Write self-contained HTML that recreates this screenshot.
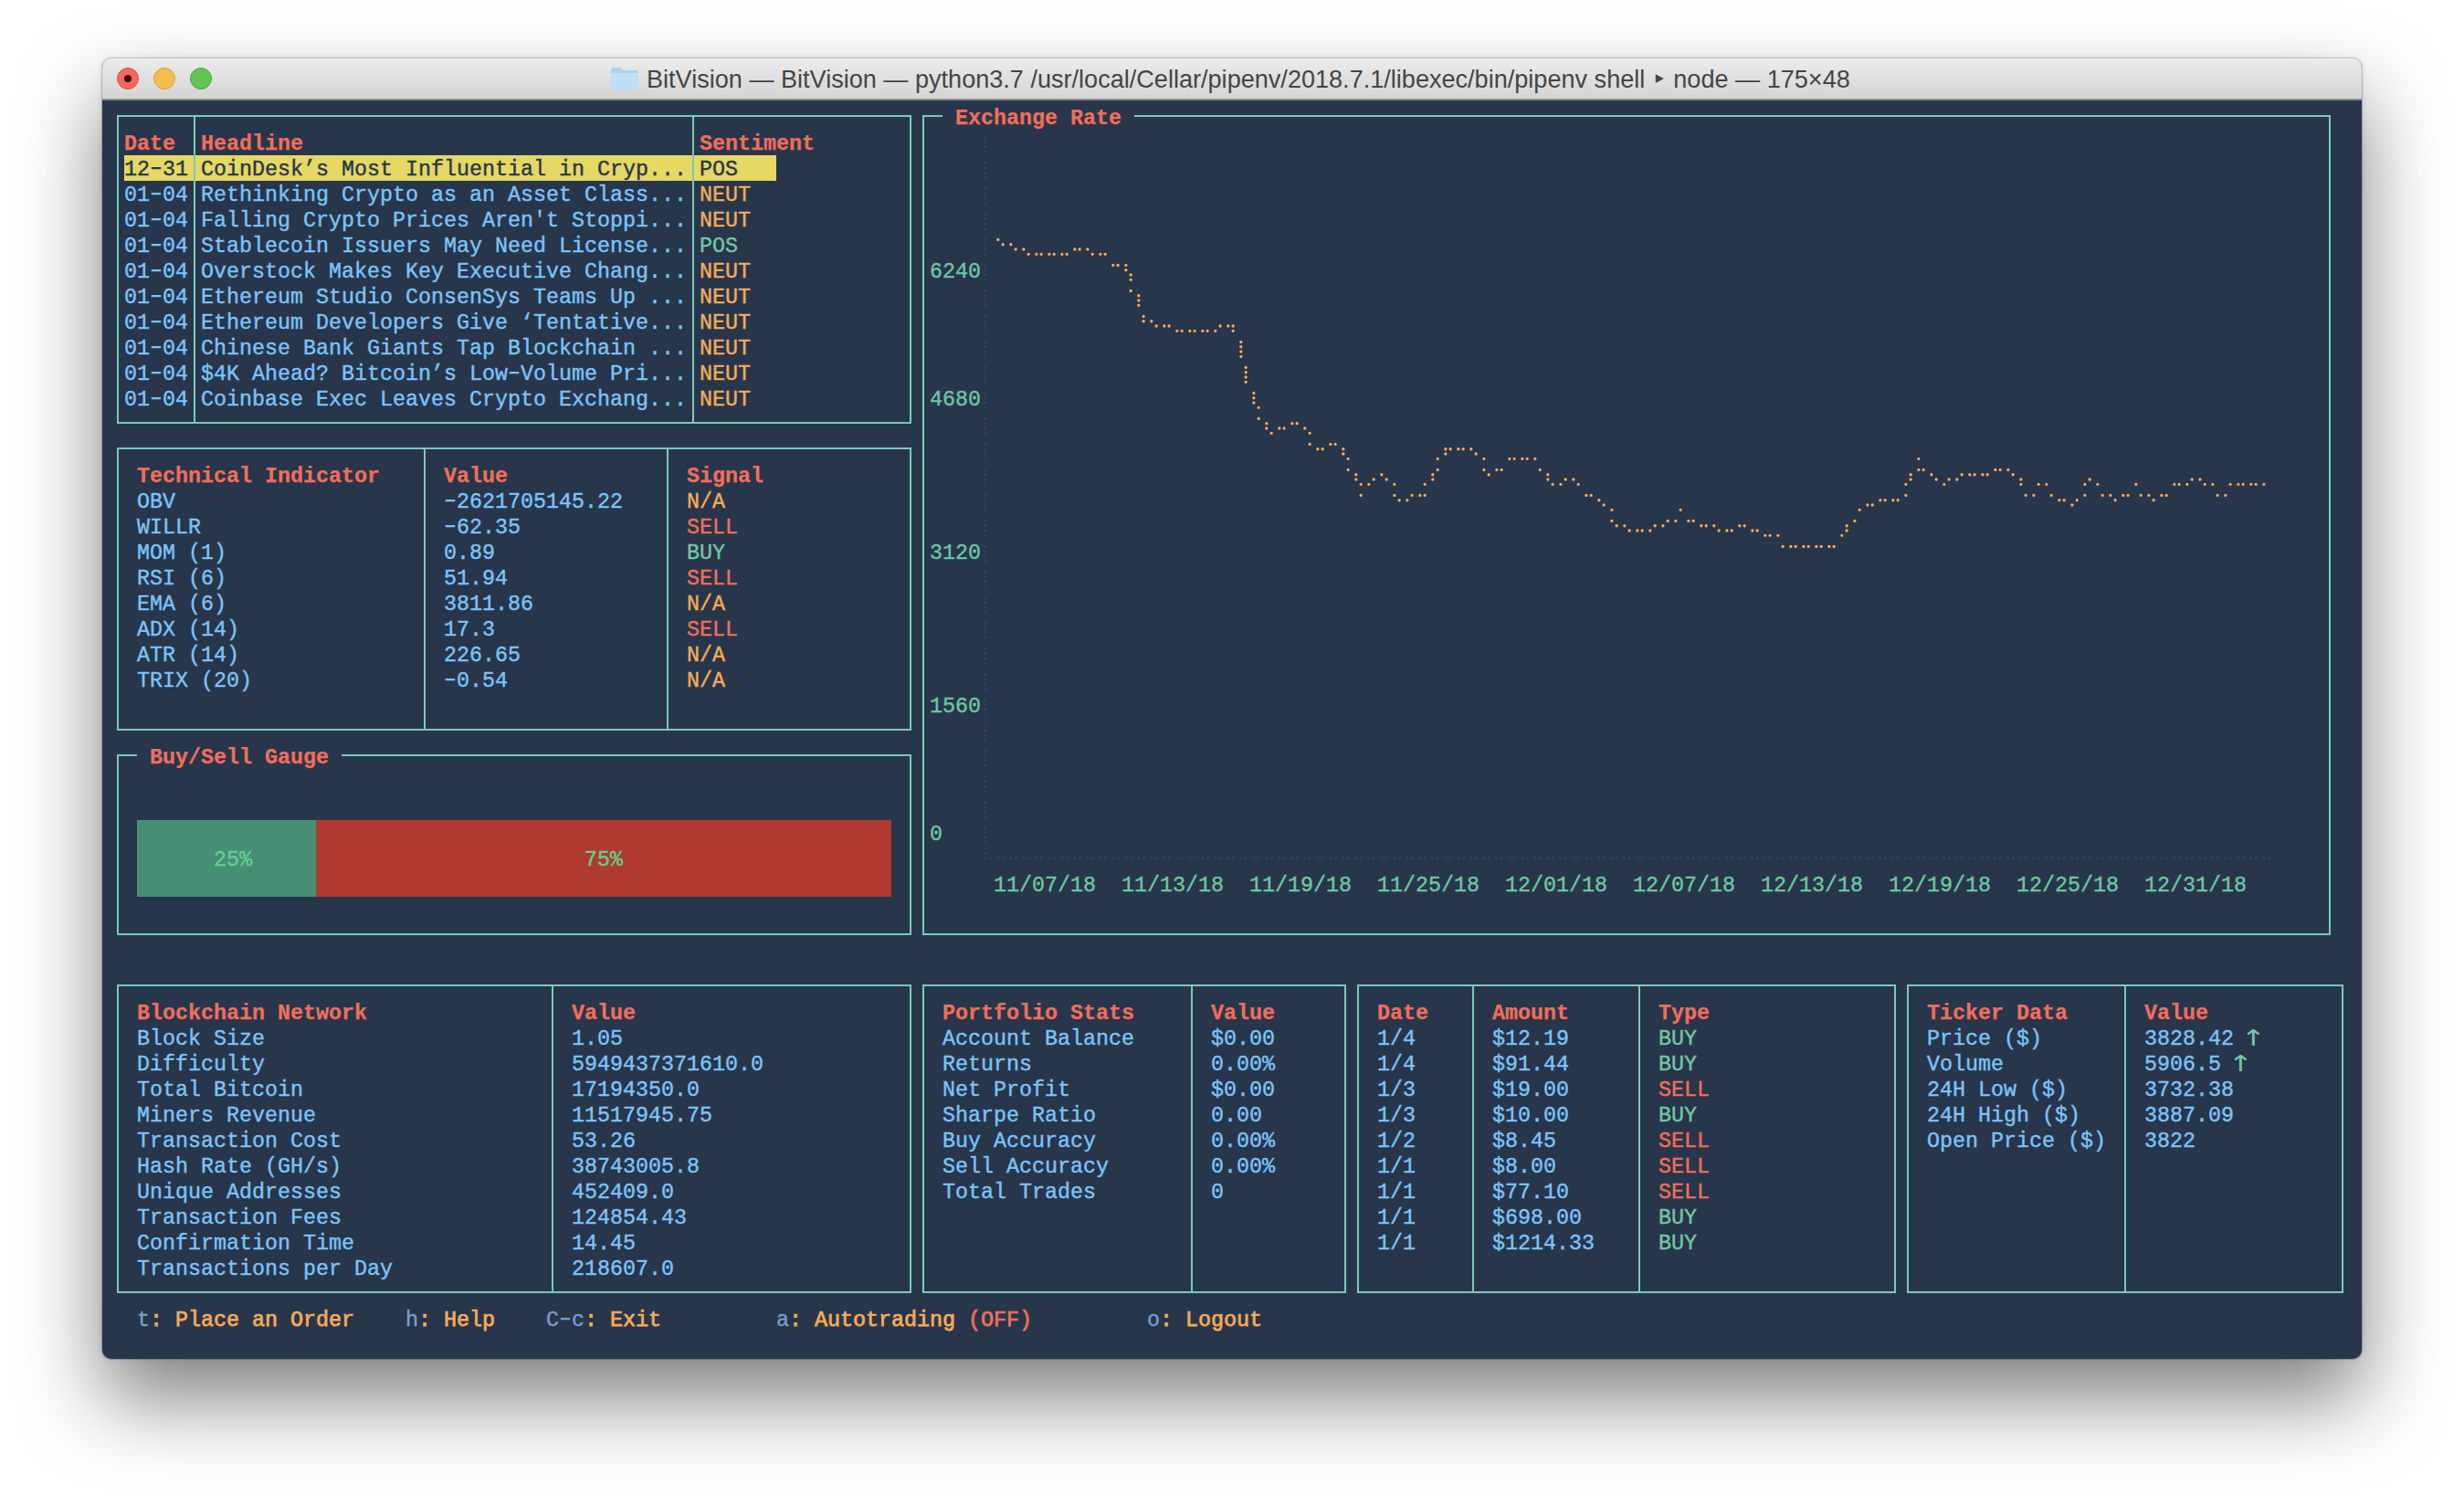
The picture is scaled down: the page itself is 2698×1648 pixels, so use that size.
<!DOCTYPE html>
<html lang="en"><head><meta charset="utf-8"><title>BitVision</title>
<style>
html,body{margin:0;padding:0;background:#fff}
body{width:2698px;height:1648px;position:relative;overflow:hidden}
#win{position:absolute;left:112px;top:64px;width:2474px;height:1424px;border-radius:10px;background:#28364b;
 box-shadow:0 0 0 1px rgba(0,0,0,.18),0 44px 90px rgba(0,0,0,.5),0 0 6px rgba(0,0,0,.12)}
#bar{position:absolute;left:112px;top:64px;width:2474px;height:44px;border-radius:10px 10px 0 0;
 background:linear-gradient(#ececec,#d4d4d4);box-shadow:inset 0 1px 0 #f6f6f6}
#barline{position:absolute;left:112px;top:108px;width:2474px;height:2px;background:linear-gradient(#9c9c9c,#7c7c7c)}
.tl{position:absolute;top:74px;width:24px;height:24px;border-radius:50%;box-sizing:border-box}
#title{position:absolute;left:708px;top:64px;height:45px;line-height:46px;font:27.08px/46px "Liberation Sans","DejaVu Sans",sans-serif;color:#454545;white-space:pre;letter-spacing:0}
.t{position:absolute;white-space:pre;font:23.333px/28px "Liberation Mono","DejaVu Sans Mono",monospace;height:28px;margin-top:1.5px}
.t{-webkit-text-stroke:0.4px currentColor}
.b{font-weight:bold;-webkit-text-stroke:0.25px currentColor}
.m{-webkit-text-stroke:0.75px currentColor}
.h{display:inline-block;font-weight:inherit;transform:translateY(-2px) scaleX(1.5)}
.ar{font-family:"DejaVu Sans",sans-serif;font-size:23.5px;width:14px;text-align:center;transform:translate(-3.5px,-1.5px) scale(1.4,1.04);-webkit-text-stroke:0}
.r{color:#f16e5b}.bl{color:#7cc3f8}.o{color:#f5ab59}.g{color:#72c6a3}.d{color:#28364b}
.k{color:#7b9dcc}.ax{color:#6fc5a0}.gt{color:#62d08c}
.l{position:absolute;background:#79cbb9}
.hl{position:absolute;background:#e5d865}
.gg{position:absolute;background:#468f75}.gr{position:absolute;background:#b03a30}
</style></head><body>
<div id="win"></div>
<div id="bar"></div><div id="barline"></div>
<i class="tl" style="left:128px;background:#ee6a5e;border:1px solid #d95045"></i>
<i class="tl" style="left:168px;background:#f5bd4f;border:1px solid #dba03a"></i>
<i class="tl" style="left:208px;background:#61c554;border:1px solid #4ba83e"></i>
<i style="position:absolute;left:136px;top:82px;width:8px;height:8px;border-radius:50%;background:#4d0000"></i>
<svg style="position:absolute;left:668px;top:71px" width="32" height="30" viewBox="0 0 32 30"><path d="M1 5.5C1 4.1 2.1 3 3.5 3h8l3 3h14c1.4 0 2.5 1.1 2.5 2.5v16c0 1.400-1.100 2.500-2.500 2.500h-25C2.100 27 1 25.900 1 24.500z" fill="#a9d3ee"/><path d="M1 9h30v15.500c0 1.400-1.100 2.500-2.500 2.500h-25C2.100 27 1 25.900 1 24.500z" fill="#bfe0f4"/></svg>
<div id="title">BitVision — BitVision — python3.7 /usr/local/Cellar/pipenv/2018.7.1/libexec/bin/pipenv shell ‣ node — 175×48</div>
<i class="hl" style="left:136px;top:170px;width:714px;height:28px"></i>
<i class="l" style="left:128px;top:126px;width:870px;height:2px"></i>
<i class="l" style="left:128px;top:462px;width:870px;height:2px"></i>
<i class="l" style="left:128px;top:126px;width:2px;height:338px"></i>
<i class="l" style="left:996px;top:126px;width:2px;height:338px"></i>
<i class="l" style="left:212px;top:126px;width:2px;height:338px"></i>
<i class="l" style="left:758px;top:126px;width:2px;height:338px"></i>
<span class="t r b" style="left:136px;top:142px">Date</span>
<span class="t r b" style="left:220px;top:142px">Headline</span>
<span class="t r b" style="left:766px;top:142px">Sentiment</span>
<span class="t d" style="left:136px;top:170px">12<b class="h">-</b>31</span>
<span class="t d" style="left:220px;top:170px">CoinDesk’s Most Influential in Cryp...</span>
<span class="t d" style="left:766px;top:170px">POS</span>
<span class="t bl" style="left:136px;top:198px">01<b class="h">-</b>04</span>
<span class="t bl" style="left:220px;top:198px">Rethinking Crypto as an Asset Class...</span>
<span class="t o" style="left:766px;top:198px">NEUT</span>
<span class="t bl" style="left:136px;top:226px">01<b class="h">-</b>04</span>
<span class="t bl" style="left:220px;top:226px">Falling Crypto Prices Aren't Stoppi...</span>
<span class="t o" style="left:766px;top:226px">NEUT</span>
<span class="t bl" style="left:136px;top:254px">01<b class="h">-</b>04</span>
<span class="t bl" style="left:220px;top:254px">Stablecoin Issuers May Need License...</span>
<span class="t g" style="left:766px;top:254px">POS</span>
<span class="t bl" style="left:136px;top:282px">01<b class="h">-</b>04</span>
<span class="t bl" style="left:220px;top:282px">Overstock Makes Key Executive Chang...</span>
<span class="t o" style="left:766px;top:282px">NEUT</span>
<span class="t bl" style="left:136px;top:310px">01<b class="h">-</b>04</span>
<span class="t bl" style="left:220px;top:310px">Ethereum Studio ConsenSys Teams Up ...</span>
<span class="t o" style="left:766px;top:310px">NEUT</span>
<span class="t bl" style="left:136px;top:338px">01<b class="h">-</b>04</span>
<span class="t bl" style="left:220px;top:338px">Ethereum Developers Give ‘Tentative...</span>
<span class="t o" style="left:766px;top:338px">NEUT</span>
<span class="t bl" style="left:136px;top:366px">01<b class="h">-</b>04</span>
<span class="t bl" style="left:220px;top:366px">Chinese Bank Giants Tap Blockchain ...</span>
<span class="t o" style="left:766px;top:366px">NEUT</span>
<span class="t bl" style="left:136px;top:394px">01<b class="h">-</b>04</span>
<span class="t bl" style="left:220px;top:394px">$4K Ahead? Bitcoin’s Low<b class="h">-</b>Volume Pri...</span>
<span class="t o" style="left:766px;top:394px">NEUT</span>
<span class="t bl" style="left:136px;top:422px">01<b class="h">-</b>04</span>
<span class="t bl" style="left:220px;top:422px">Coinbase Exec Leaves Crypto Exchang...</span>
<span class="t o" style="left:766px;top:422px">NEUT</span>
<i class="l" style="left:128px;top:490px;width:870px;height:2px"></i>
<i class="l" style="left:128px;top:798px;width:870px;height:2px"></i>
<i class="l" style="left:128px;top:490px;width:2px;height:310px"></i>
<i class="l" style="left:996px;top:490px;width:2px;height:310px"></i>
<i class="l" style="left:464px;top:490px;width:2px;height:310px"></i>
<i class="l" style="left:730px;top:490px;width:2px;height:310px"></i>
<span class="t r b" style="left:150px;top:506px">Technical Indicator</span>
<span class="t r b" style="left:486px;top:506px">Value</span>
<span class="t r b" style="left:752px;top:506px">Signal</span>
<span class="t bl" style="left:150px;top:534px">OBV</span>
<span class="t bl" style="left:486px;top:534px"><b class="h">-</b>2621705145.22</span>
<span class="t o" style="left:752px;top:534px">N/A</span>
<span class="t bl" style="left:150px;top:562px">WILLR</span>
<span class="t bl" style="left:486px;top:562px"><b class="h">-</b>62.35</span>
<span class="t r" style="left:752px;top:562px">SELL</span>
<span class="t bl" style="left:150px;top:590px">MOM (1)</span>
<span class="t bl" style="left:486px;top:590px">0.89</span>
<span class="t g" style="left:752px;top:590px">BUY</span>
<span class="t bl" style="left:150px;top:618px">RSI (6)</span>
<span class="t bl" style="left:486px;top:618px">51.94</span>
<span class="t r" style="left:752px;top:618px">SELL</span>
<span class="t bl" style="left:150px;top:646px">EMA (6)</span>
<span class="t bl" style="left:486px;top:646px">3811.86</span>
<span class="t o" style="left:752px;top:646px">N/A</span>
<span class="t bl" style="left:150px;top:674px">ADX (14)</span>
<span class="t bl" style="left:486px;top:674px">17.3</span>
<span class="t r" style="left:752px;top:674px">SELL</span>
<span class="t bl" style="left:150px;top:702px">ATR (14)</span>
<span class="t bl" style="left:486px;top:702px">226.65</span>
<span class="t o" style="left:752px;top:702px">N/A</span>
<span class="t bl" style="left:150px;top:730px">TRIX (20)</span>
<span class="t bl" style="left:486px;top:730px"><b class="h">-</b>0.54</span>
<span class="t o" style="left:752px;top:730px">N/A</span>
<i class="l" style="left:128px;top:826px;width:22px;height:2px"></i>
<i class="l" style="left:374px;top:826px;width:624px;height:2px"></i>
<span class="t r b" style="left:164px;top:814px">Buy/Sell Gauge</span>
<i class="l" style="left:128px;top:1022px;width:870px;height:2px"></i>
<i class="l" style="left:128px;top:826px;width:2px;height:198px"></i>
<i class="l" style="left:996px;top:826px;width:2px;height:198px"></i>
<i class="gg" style="left:150px;top:898px;width:196px;height:84px"></i>
<i class="gr" style="left:346px;top:898px;width:630px;height:84px"></i>
<span class="t gt" style="left:234px;top:926px">25%</span>
<span class="t gt" style="left:640px;top:926px">75%</span>
<i class="l" style="left:1010px;top:126px;width:22px;height:2px"></i>
<i class="l" style="left:1242px;top:126px;width:1310px;height:2px"></i>
<span class="t r b" style="left:1046px;top:114px">Exchange Rate</span>
<i class="l" style="left:1010px;top:1022px;width:1542px;height:2px"></i>
<i class="l" style="left:1010px;top:126px;width:2px;height:898px"></i>
<i class="l" style="left:2550px;top:126px;width:2px;height:898px"></i>
<span class="t ax" style="left:1018px;top:282px">6240</span>
<span class="t ax" style="left:1018px;top:422px">4680</span>
<span class="t ax" style="left:1018px;top:590px">3120</span>
<span class="t ax" style="left:1018px;top:758px">1560</span>
<span class="t ax" style="left:1018px;top:898px">0</span>
<span class="t ax" style="left:1088px;top:954px">11/07/18</span>
<span class="t ax" style="left:1228px;top:954px">11/13/18</span>
<span class="t ax" style="left:1368px;top:954px">11/19/18</span>
<span class="t ax" style="left:1508px;top:954px">11/25/18</span>
<span class="t ax" style="left:1648px;top:954px">12/01/18</span>
<span class="t ax" style="left:1788px;top:954px">12/07/18</span>
<span class="t ax" style="left:1928px;top:954px">12/13/18</span>
<span class="t ax" style="left:2068px;top:954px">12/19/18</span>
<span class="t ax" style="left:2208px;top:954px">12/25/18</span>
<span class="t ax" style="left:2348px;top:954px">12/31/18</span>
<svg style="position:absolute;left:0;top:0" width="2698" height="1648" viewBox="0 0 2698 1648" fill="none" stroke-linecap="round"><path stroke="#2f4160" stroke-width="3.3" d="M1078.85 150.45h0M1078.85 155.75h0M1078.85 161h0M1078.85 166.30h0M1078.85 178.45h0M1078.85 183.75h0M1078.85 189h0M1078.85 194.30h0M1078.85 206.45h0M1078.85 211.75h0M1078.85 217h0M1078.85 222.30h0M1078.85 234.45h0M1078.85 239.75h0M1078.85 245h0M1078.85 250.30h0M1078.85 262.45h0M1078.85 267.75h0M1078.85 273h0M1078.85 278.30h0M1078.85 290.45h0M1078.85 295.75h0M1078.85 301h0M1078.85 306.30h0M1078.85 318.45h0M1078.85 323.75h0M1078.85 329h0M1078.85 334.30h0M1078.85 346.45h0M1078.85 351.75h0M1078.85 357h0M1078.85 362.30h0M1078.85 374.45h0M1078.85 379.75h0M1078.85 385h0M1078.85 390.30h0M1078.85 402.45h0M1078.85 407.75h0M1078.85 413h0M1078.85 418.30h0M1078.85 430.45h0M1078.85 435.75h0M1078.85 441h0M1078.85 446.30h0M1078.85 458.45h0M1078.85 463.75h0M1078.85 469h0M1078.85 474.30h0M1078.85 486.45h0M1078.85 491.75h0M1078.85 497h0M1078.85 502.30h0M1078.85 514.45h0M1078.85 519.75h0M1078.85 525h0M1078.85 530.30h0M1078.85 542.45h0M1078.85 547.75h0M1078.85 553h0M1078.85 558.30h0M1078.85 570.45h0M1078.85 575.75h0M1078.85 581h0M1078.85 586.30h0M1078.85 598.45h0M1078.85 603.75h0M1078.85 609h0M1078.85 614.30h0M1078.85 626.45h0M1078.85 631.75h0M1078.85 637h0M1078.85 642.30h0M1078.85 654.45h0M1078.85 659.75h0M1078.85 665h0M1078.85 670.30h0M1078.85 682.45h0M1078.85 687.75h0M1078.85 693h0M1078.85 698.30h0M1078.85 710.45h0M1078.85 715.75h0M1078.85 721h0M1078.85 726.30h0M1078.85 738.45h0M1078.85 743.75h0M1078.85 749h0M1078.85 754.30h0M1078.85 766.45h0M1078.85 771.75h0M1078.85 777h0M1078.85 782.30h0M1078.85 794.45h0M1078.85 799.75h0M1078.85 805h0M1078.85 810.30h0M1078.85 822.45h0M1078.85 827.75h0M1078.85 833h0M1078.85 838.30h0M1078.85 850.45h0M1078.85 855.75h0M1078.85 861h0M1078.85 866.30h0M1078.85 878.45h0M1078.85 883.75h0M1078.85 889h0M1078.85 894.30h0M1078.85 906.45h0M1078.85 911.75h0M1078.85 917h0M1078.85 922.30h0M1078.85 934.45h0M1078.85 939.75h0M1084.15 939.75h0M1092.85 939.75h0M1098.15 939.75h0M1106.85 939.75h0M1112.15 939.75h0M1120.85 939.75h0M1126.15 939.75h0M1134.85 939.75h0M1140.15 939.75h0M1148.85 939.75h0M1154.15 939.75h0M1162.85 939.75h0M1168.15 939.75h0M1176.85 939.75h0M1182.15 939.75h0M1190.85 939.75h0M1196.15 939.75h0M1204.85 939.75h0M1210.15 939.75h0M1218.85 939.75h0M1224.15 939.75h0M1232.85 939.75h0M1238.15 939.75h0M1246.85 939.75h0M1252.15 939.75h0M1260.85 939.75h0M1266.15 939.75h0M1274.85 939.75h0M1280.15 939.75h0M1288.85 939.75h0M1294.15 939.75h0M1302.85 939.75h0M1308.15 939.75h0M1316.85 939.75h0M1322.15 939.75h0M1330.85 939.75h0M1336.15 939.75h0M1344.85 939.75h0M1350.15 939.75h0M1358.85 939.75h0M1364.15 939.75h0M1372.85 939.75h0M1378.15 939.75h0M1386.85 939.75h0M1392.15 939.75h0M1400.85 939.75h0M1406.15 939.75h0M1414.85 939.75h0M1420.15 939.75h0M1428.85 939.75h0M1434.15 939.75h0M1442.85 939.75h0M1448.15 939.75h0M1456.85 939.75h0M1462.15 939.75h0M1470.85 939.75h0M1476.15 939.75h0M1484.85 939.75h0M1490.15 939.75h0M1498.85 939.75h0M1504.15 939.75h0M1512.85 939.75h0M1518.15 939.75h0M1526.85 939.75h0M1532.15 939.75h0M1540.85 939.75h0M1546.15 939.75h0M1554.85 939.75h0M1560.15 939.75h0M1568.85 939.75h0M1574.15 939.75h0M1582.85 939.75h0M1588.15 939.75h0M1596.85 939.75h0M1602.15 939.75h0M1610.85 939.75h0M1616.15 939.75h0M1624.85 939.75h0M1630.15 939.75h0M1638.85 939.75h0M1644.15 939.75h0M1652.85 939.75h0M1658.15 939.75h0M1666.85 939.75h0M1672.15 939.75h0M1680.85 939.75h0M1686.15 939.75h0M1694.85 939.75h0M1700.15 939.75h0M1708.85 939.75h0M1714.15 939.75h0M1722.85 939.75h0M1728.15 939.75h0M1736.85 939.75h0M1742.15 939.75h0M1750.85 939.75h0M1756.15 939.75h0M1764.85 939.75h0M1770.15 939.75h0M1778.85 939.75h0M1784.15 939.75h0M1792.85 939.75h0M1798.15 939.75h0M1806.85 939.75h0M1812.15 939.75h0M1820.85 939.75h0M1826.15 939.75h0M1834.85 939.75h0M1840.15 939.75h0M1848.85 939.75h0M1854.15 939.75h0M1862.85 939.75h0M1868.15 939.75h0M1876.85 939.75h0M1882.15 939.75h0M1890.85 939.75h0M1896.15 939.75h0M1904.85 939.75h0M1910.15 939.75h0M1918.85 939.75h0M1924.15 939.75h0M1932.85 939.75h0M1938.15 939.75h0M1946.85 939.75h0M1952.15 939.75h0M1960.85 939.75h0M1966.15 939.75h0M1974.85 939.75h0M1980.15 939.75h0M1988.85 939.75h0M1994.15 939.75h0M2002.85 939.75h0M2008.15 939.75h0M2016.85 939.75h0M2022.15 939.75h0M2030.85 939.75h0M2036.15 939.75h0M2044.85 939.75h0M2050.15 939.75h0M2058.85 939.75h0M2064.15 939.75h0M2072.85 939.75h0M2078.15 939.75h0M2086.85 939.75h0M2092.15 939.75h0M2100.85 939.75h0M2106.15 939.75h0M2114.85 939.75h0M2120.15 939.75h0M2128.85 939.75h0M2134.15 939.75h0M2142.85 939.75h0M2148.15 939.75h0M2156.85 939.75h0M2162.15 939.75h0M2170.85 939.75h0M2176.15 939.75h0M2184.85 939.75h0M2190.15 939.75h0M2198.85 939.75h0M2204.15 939.75h0M2212.85 939.75h0M2218.15 939.75h0M2226.85 939.75h0M2232.15 939.75h0M2240.85 939.75h0M2246.15 939.75h0M2254.85 939.75h0M2260.15 939.75h0M2268.85 939.75h0M2274.15 939.75h0M2282.85 939.75h0M2288.15 939.75h0M2296.85 939.75h0M2302.15 939.75h0M2310.85 939.75h0M2316.15 939.75h0M2324.85 939.75h0M2330.15 939.75h0M2338.85 939.75h0M2344.15 939.75h0M2352.85 939.75h0M2358.15 939.75h0M2366.85 939.75h0M2372.15 939.75h0M2380.85 939.75h0M2386.15 939.75h0M2394.85 939.75h0M2400.15 939.75h0M2408.85 939.75h0M2414.15 939.75h0M2422.85 939.75h0M2428.15 939.75h0M2436.85 939.75h0M2442.15 939.75h0M2450.85 939.75h0M2456.15 939.75h0M2464.85 939.75h0M2470.15 939.75h0M2478.85 939.75h0M2484.15 939.75h0"/><path stroke="#f7ad5a" stroke-width="3.3" d="M1092.85 262.45h0M1098.15 267.75h0M1106.85 267.75h0M1112.15 273h0M1120.85 273h0M1126.15 278.30h0M1134.85 278.30h0M1140.15 278.30h0M1148.85 278.30h0M1154.15 278.30h0M1162.85 278.30h0M1168.15 278.30h0M1176.85 273h0M1182.15 273h0M1190.85 273h0M1196.15 278.30h0M1204.85 278.30h0M1210.15 278.30h0M1218.85 290.45h0M1224.15 290.45h0M1232.85 290.45h0M1232.85 295.75h0M1238.15 301h0M1238.15 306.30h0M1238.15 318.45h0M1246.85 323.75h0M1246.85 329h0M1246.85 334.30h0M1252.15 346.45h0M1252.15 351.75h0M1260.85 351.75h0M1266.15 357h0M1274.85 357h0M1280.15 357h0M1288.85 362.30h0M1294.15 362.30h0M1302.85 362.30h0M1308.15 362.30h0M1316.85 362.30h0M1322.15 362.30h0M1330.85 362.30h0M1336.15 357h0M1344.85 357h0M1350.15 357h0M1350.15 362.30h0M1358.85 374.45h0M1358.85 379.75h0M1358.85 385h0M1358.85 390.30h0M1364.15 402.45h0M1364.15 407.75h0M1364.15 413h0M1364.15 418.30h0M1372.85 430.45h0M1372.85 435.75h0M1372.85 441h0M1378.15 446.30h0M1378.15 458.45h0M1386.85 463.75h0M1386.85 469h0M1392.15 474.30h0M1400.85 469h0M1406.15 469h0M1414.85 463.75h0M1420.15 463.75h0M1428.85 469h0M1434.15 474.30h0M1434.15 486.45h0M1442.85 491.75h0M1448.15 491.75h0M1456.85 486.45h0M1462.15 486.45h0M1470.85 491.75h0M1470.85 497h0M1476.15 502.30h0M1476.15 514.45h0M1484.85 519.75h0M1484.85 525h0M1490.15 530.30h0M1490.15 542.45h0M1498.85 530.30h0M1504.15 525h0M1512.85 519.75h0M1518.15 525h0M1526.85 530.30h0M1526.85 542.45h0M1532.15 547.75h0M1540.85 547.75h0M1546.15 542.45h0M1554.85 542.45h0M1560.15 542.45h0M1560.15 530.30h0M1568.85 525h0M1568.85 519.75h0M1574.15 514.45h0M1574.15 502.30h0M1582.85 497h0M1582.85 491.75h0M1588.15 491.75h0M1596.85 491.75h0M1602.15 491.75h0M1610.85 491.75h0M1616.15 497h0M1624.85 502.30h0M1624.85 514.45h0M1630.15 519.75h0M1638.85 514.45h0M1644.15 514.45h0M1652.85 502.30h0M1658.15 502.30h0M1666.85 502.30h0M1672.15 502.30h0M1680.85 502.30h0M1686.15 514.45h0M1694.85 519.75h0M1694.85 525h0M1700.15 530.30h0M1708.85 530.30h0M1714.15 525h0M1722.85 525h0M1728.15 530.30h0M1736.85 542.45h0M1742.15 542.45h0M1750.85 547.75h0M1756.15 553h0M1764.85 558.30h0M1764.85 570.45h0M1770.15 575.75h0M1778.85 575.75h0M1784.15 581h0M1792.85 581h0M1798.15 581h0M1806.85 581h0M1812.15 575.75h0M1820.85 575.75h0M1826.15 570.45h0M1834.85 570.45h0M1840.15 558.30h0M1848.85 570.45h0M1854.15 570.45h0M1862.85 575.75h0M1868.15 575.75h0M1876.85 575.75h0M1882.15 581h0M1890.85 581h0M1896.15 581h0M1904.85 575.75h0M1910.15 575.75h0M1918.85 581h0M1924.15 581h0M1932.85 586.30h0M1938.15 586.30h0M1946.85 586.30h0M1952.15 598.45h0M1960.85 598.45h0M1966.15 598.45h0M1974.85 598.45h0M1980.15 598.45h0M1988.85 598.45h0M1994.15 598.45h0M2002.85 598.45h0M2008.15 598.45h0M2016.85 586.30h0M2022.15 581h0M2022.15 575.75h0M2030.85 570.45h0M2036.15 558.30h0M2044.85 553h0M2050.15 553h0M2058.85 547.75h0M2064.15 547.75h0M2072.85 547.75h0M2078.15 547.75h0M2086.85 542.45h0M2086.85 530.30h0M2092.15 525h0M2092.15 519.75h0M2100.85 514.45h0M2100.85 502.30h0M2106.15 514.45h0M2114.85 519.75h0M2120.15 525h0M2128.85 530.30h0M2134.15 525h0M2142.85 525h0M2148.15 519.75h0M2156.85 519.75h0M2162.15 519.75h0M2170.85 519.75h0M2176.15 519.75h0M2184.85 514.45h0M2190.15 514.45h0M2198.85 514.45h0M2204.15 519.75h0M2212.85 525h0M2212.85 530.30h0M2218.15 542.45h0M2226.85 542.45h0M2232.15 530.30h0M2240.85 530.30h0M2246.15 542.45h0M2254.85 547.75h0M2260.15 547.75h0M2268.85 553h0M2274.15 547.75h0M2282.85 542.45h0M2282.85 530.30h0M2288.15 525h0M2296.85 530.30h0M2302.15 542.45h0M2310.85 542.45h0M2316.15 547.75h0M2324.85 542.45h0M2330.15 542.45h0M2338.85 530.30h0M2344.15 542.45h0M2352.85 542.45h0M2358.15 547.75h0M2366.85 542.45h0M2372.15 542.45h0M2380.85 530.30h0M2386.15 530.30h0M2394.85 530.30h0M2400.15 525h0M2408.85 525h0M2414.15 530.30h0M2422.85 530.30h0M2428.15 542.45h0M2436.85 542.45h0M2442.15 530.30h0M2450.85 530.30h0M2456.15 530.30h0M2464.85 530.30h0M2470.15 530.30h0M2478.85 530.30h0"/></svg>
<i class="l" style="left:128px;top:1078px;width:870px;height:2px"></i>
<i class="l" style="left:128px;top:1414px;width:870px;height:2px"></i>
<i class="l" style="left:128px;top:1078px;width:2px;height:338px"></i>
<i class="l" style="left:996px;top:1078px;width:2px;height:338px"></i>
<i class="l" style="left:604px;top:1078px;width:2px;height:338px"></i>
<span class="t r b" style="left:150px;top:1094px">Blockchain Network</span>
<span class="t r b" style="left:626px;top:1094px">Value</span>
<span class="t bl" style="left:150px;top:1122px">Block Size</span>
<span class="t bl" style="left:626px;top:1122px">1.05</span>
<span class="t bl" style="left:150px;top:1150px">Difficulty</span>
<span class="t bl" style="left:626px;top:1150px">5949437371610.0</span>
<span class="t bl" style="left:150px;top:1178px">Total Bitcoin</span>
<span class="t bl" style="left:626px;top:1178px">17194350.0</span>
<span class="t bl" style="left:150px;top:1206px">Miners Revenue</span>
<span class="t bl" style="left:626px;top:1206px">11517945.75</span>
<span class="t bl" style="left:150px;top:1234px">Transaction Cost</span>
<span class="t bl" style="left:626px;top:1234px">53.26</span>
<span class="t bl" style="left:150px;top:1262px">Hash Rate (GH/s)</span>
<span class="t bl" style="left:626px;top:1262px">38743005.8</span>
<span class="t bl" style="left:150px;top:1290px">Unique Addresses</span>
<span class="t bl" style="left:626px;top:1290px">452409.0</span>
<span class="t bl" style="left:150px;top:1318px">Transaction Fees</span>
<span class="t bl" style="left:626px;top:1318px">124854.43</span>
<span class="t bl" style="left:150px;top:1346px">Confirmation Time</span>
<span class="t bl" style="left:626px;top:1346px">14.45</span>
<span class="t bl" style="left:150px;top:1374px">Transactions per Day</span>
<span class="t bl" style="left:626px;top:1374px">218607.0</span>
<i class="l" style="left:1010px;top:1078px;width:464px;height:2px"></i>
<i class="l" style="left:1010px;top:1414px;width:464px;height:2px"></i>
<i class="l" style="left:1010px;top:1078px;width:2px;height:338px"></i>
<i class="l" style="left:1472px;top:1078px;width:2px;height:338px"></i>
<i class="l" style="left:1304px;top:1078px;width:2px;height:338px"></i>
<span class="t r b" style="left:1032px;top:1094px">Portfolio Stats</span>
<span class="t r b" style="left:1326px;top:1094px">Value</span>
<span class="t bl" style="left:1032px;top:1122px">Account Balance</span>
<span class="t bl" style="left:1326px;top:1122px">$0.00</span>
<span class="t bl" style="left:1032px;top:1150px">Returns</span>
<span class="t bl" style="left:1326px;top:1150px">0.00%</span>
<span class="t bl" style="left:1032px;top:1178px">Net Profit</span>
<span class="t bl" style="left:1326px;top:1178px">$0.00</span>
<span class="t bl" style="left:1032px;top:1206px">Sharpe Ratio</span>
<span class="t bl" style="left:1326px;top:1206px">0.00</span>
<span class="t bl" style="left:1032px;top:1234px">Buy Accuracy</span>
<span class="t bl" style="left:1326px;top:1234px">0.00%</span>
<span class="t bl" style="left:1032px;top:1262px">Sell Accuracy</span>
<span class="t bl" style="left:1326px;top:1262px">0.00%</span>
<span class="t bl" style="left:1032px;top:1290px">Total Trades</span>
<span class="t bl" style="left:1326px;top:1290px">0</span>
<i class="l" style="left:1486px;top:1078px;width:590px;height:2px"></i>
<i class="l" style="left:1486px;top:1414px;width:590px;height:2px"></i>
<i class="l" style="left:1486px;top:1078px;width:2px;height:338px"></i>
<i class="l" style="left:2074px;top:1078px;width:2px;height:338px"></i>
<i class="l" style="left:1612px;top:1078px;width:2px;height:338px"></i>
<i class="l" style="left:1794px;top:1078px;width:2px;height:338px"></i>
<span class="t r b" style="left:1508px;top:1094px">Date</span>
<span class="t r b" style="left:1634px;top:1094px">Amount</span>
<span class="t r b" style="left:1816px;top:1094px">Type</span>
<span class="t bl" style="left:1508px;top:1122px">1/4</span>
<span class="t bl" style="left:1634px;top:1122px">$12.19</span>
<span class="t g" style="left:1816px;top:1122px">BUY</span>
<span class="t bl" style="left:1508px;top:1150px">1/4</span>
<span class="t bl" style="left:1634px;top:1150px">$91.44</span>
<span class="t g" style="left:1816px;top:1150px">BUY</span>
<span class="t bl" style="left:1508px;top:1178px">1/3</span>
<span class="t bl" style="left:1634px;top:1178px">$19.00</span>
<span class="t r" style="left:1816px;top:1178px">SELL</span>
<span class="t bl" style="left:1508px;top:1206px">1/3</span>
<span class="t bl" style="left:1634px;top:1206px">$10.00</span>
<span class="t g" style="left:1816px;top:1206px">BUY</span>
<span class="t bl" style="left:1508px;top:1234px">1/2</span>
<span class="t bl" style="left:1634px;top:1234px">$8.45</span>
<span class="t r" style="left:1816px;top:1234px">SELL</span>
<span class="t bl" style="left:1508px;top:1262px">1/1</span>
<span class="t bl" style="left:1634px;top:1262px">$8.00</span>
<span class="t r" style="left:1816px;top:1262px">SELL</span>
<span class="t bl" style="left:1508px;top:1290px">1/1</span>
<span class="t bl" style="left:1634px;top:1290px">$77.10</span>
<span class="t r" style="left:1816px;top:1290px">SELL</span>
<span class="t bl" style="left:1508px;top:1318px">1/1</span>
<span class="t bl" style="left:1634px;top:1318px">$698.00</span>
<span class="t g" style="left:1816px;top:1318px">BUY</span>
<span class="t bl" style="left:1508px;top:1346px">1/1</span>
<span class="t bl" style="left:1634px;top:1346px">$1214.33</span>
<span class="t g" style="left:1816px;top:1346px">BUY</span>
<i class="l" style="left:2088px;top:1078px;width:478px;height:2px"></i>
<i class="l" style="left:2088px;top:1414px;width:478px;height:2px"></i>
<i class="l" style="left:2088px;top:1078px;width:2px;height:338px"></i>
<i class="l" style="left:2564px;top:1078px;width:2px;height:338px"></i>
<i class="l" style="left:2326px;top:1078px;width:2px;height:338px"></i>
<span class="t r b" style="left:2110px;top:1094px">Ticker Data</span>
<span class="t r b" style="left:2348px;top:1094px">Value</span>
<span class="t bl" style="left:2110px;top:1122px">Price ($)</span>
<span class="t bl" style="left:2348px;top:1122px">3828.42</span>
<span class="t g ar" style="left:2460px;top:1122px">↑</span>
<span class="t bl" style="left:2110px;top:1150px">Volume</span>
<span class="t bl" style="left:2348px;top:1150px">5906.5</span>
<span class="t g ar" style="left:2446px;top:1150px">↑</span>
<span class="t bl" style="left:2110px;top:1178px">24H Low ($)</span>
<span class="t bl" style="left:2348px;top:1178px">3732.38</span>
<span class="t bl" style="left:2110px;top:1206px">24H High ($)</span>
<span class="t bl" style="left:2348px;top:1206px">3887.09</span>
<span class="t bl" style="left:2110px;top:1234px">Open Price ($)</span>
<span class="t bl" style="left:2348px;top:1234px">3822</span>
<span class="t k" style="left:150px;top:1430px">t</span>
<span class="t o m" style="left:164px;top:1430px">: Place an Order</span>
<span class="t k" style="left:444px;top:1430px">h</span>
<span class="t o m" style="left:458px;top:1430px">: Help</span>
<span class="t k" style="left:598px;top:1430px">C<b class="h">-</b>c</span>
<span class="t o m" style="left:640px;top:1430px">: Exit</span>
<span class="t k" style="left:850px;top:1430px">a</span>
<span class="t o m" style="left:864px;top:1430px">: Autotrading</span>
<span class="t r m" style="left:1060px;top:1430px">(OFF)</span>
<span class="t k" style="left:1256px;top:1430px">o</span>
<span class="t o m" style="left:1270px;top:1430px">: Logout</span>
</body></html>
